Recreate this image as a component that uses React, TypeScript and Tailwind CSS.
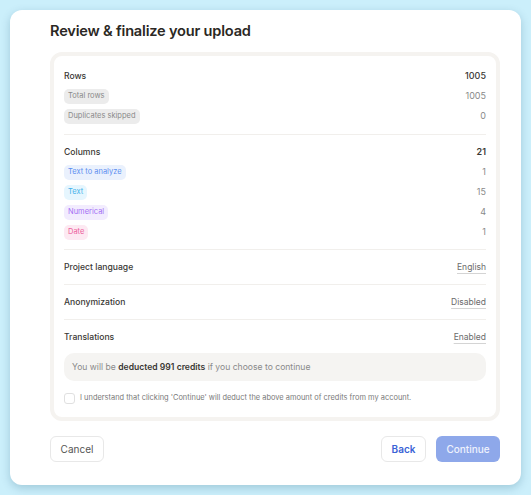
import React from "react";

const font = { fontFamily: "Inter, 'Noto Sans', sans-serif" };

function Pill({ text, cls }: { text: string; cls: string }) {
  return (
    <span className={`inline-flex items-center h-[15px] px-[4px] rounded-[5px] text-[7.5px] leading-none ${cls}`}>
      {text}
    </span>
  );
}

function SubRow({ pill, cls, value }: { pill: string; cls: string; value: string }) {
  return (
    <div className="flex items-center justify-between h-[20px]">
      <Pill text={pill} cls={cls} />
      <span className="text-[9px] text-[#8a8a8a]">{value}</span>
    </div>
  );
}

function Divider() {
  return <div className="h-px bg-[#f1efec]" />;
}

function SettingRow({ label, value }: { label: string; value: string }) {
  return (
    <div className="flex items-center justify-between h-[20px]">
      <span className="text-[8.6px] font-medium text-[#3a3835]">{label}</span>
      <span className="text-[8.5px] text-[#6b6b6b] underline decoration-[#d4d4d4] underline-offset-[3px]">{value}</span>
    </div>
  );
}

export default function App() {
  return (
    <div style={font} className="w-full h-[495px] bg-[#cbeffb] p-[10px]">
      <div className="h-[475px] bg-white rounded-[12px] shadow-[0_3px_10px_rgba(0,70,100,0.22)] pl-[40px] pr-[21px] pt-[10px]">
        <h1 className="text-[14.6px] leading-[22px] font-semibold tracking-[-0.2px] text-[#2b2824]">
          Review &amp; finalize your upload
        </h1>
        <div className="mt-[10px] border-4 border-[#f5f3f0] rounded-[12px] px-[10px] pt-[10px] pb-[12px]">
          <div className="pb-[8px]">
            <div className="flex items-center justify-between h-[20px]">
              <span className="text-[8.6px] font-medium text-[#3a3835]">Rows</span>
              <span className="text-[9px] font-medium text-[#3a3835]">1005</span>
            </div>
            <SubRow pill="Total rows" cls="bg-[#ececec] text-[#8a8a8a]" value="1005" />
            <SubRow pill="Duplicates skipped" cls="bg-[#ececec] text-[#8a8a8a]" value="0" />
          </div>
          <Divider />
          <div className="pt-[7px] pb-[7px]">
            <div className="flex items-center justify-between h-[20px]">
              <span className="text-[8.6px] font-medium text-[#3a3835]">Columns</span>
              <span className="text-[9px] font-semibold text-[#3a3835]">21</span>
            </div>
            <SubRow pill="Text to analyze" cls="bg-[#eaf1fd] text-[#5d8ff0]" value="1" />
            <SubRow pill="Text" cls="bg-[#e6f6fe] text-[#47b2ea]" value="15" />
            <SubRow pill="Numerical" cls="bg-[#f2ecfe] text-[#a46ff4]" value="4" />
            <SubRow pill="Date" cls="bg-[#fde9f2] text-[#ec5f9d]" value="1" />
          </div>
          <Divider />
          <div className="py-[7px]">
            <SettingRow label="Project language" value="English" />
          </div>
          <Divider />
          <div className="py-[7px]">
            <SettingRow label="Anonymization" value="Disabled" />
          </div>
          <Divider />
          <div className="pt-[7px]">
            <SettingRow label="Translations" value="Enabled" />
            <div className="mt-[6px] h-[28px] rounded-[10px] bg-[#f5f4f2] px-[8px] flex items-center text-[8.6px] text-[#8a8a8a]">
              <span>
                You will be <span className="font-semibold text-[#3a3835]">deducted 991 credits</span> if you choose to continue
              </span>
            </div>
            <div className="mt-[10px] flex items-center gap-[5px] h-[14px]">
              <span className="w-[11px] h-[11px] rounded-[3px] border border-[#e0e0e0] bg-white" />
              <span className="text-[7.45px] text-[#7a7a7a]">
                I understand that clicking 'Continue' will deduct the above amount of credits from my account.
              </span>
            </div>
          </div>
        </div>
        <div className="mt-[15px] flex items-center justify-between">
          <button className="h-[26px] w-[54px] rounded-[6px] border border-[#e8e8e8] bg-white text-[10px] text-[#555]">
            Cancel
          </button>
          <div className="flex items-center gap-[10px]">
            <button className="h-[26px] w-[45px] rounded-[6px] border border-[#e8e8e8] bg-white text-[10px] font-semibold text-[#3b63d6]">
              Back
            </button>
            <button className="h-[26px] w-[64px] rounded-[6px] bg-[#8ea8ea] text-[10px] font-medium text-[#eef2fd]">
              Continue
            </button>
          </div>
        </div>
      </div>
    </div>
  );
}
